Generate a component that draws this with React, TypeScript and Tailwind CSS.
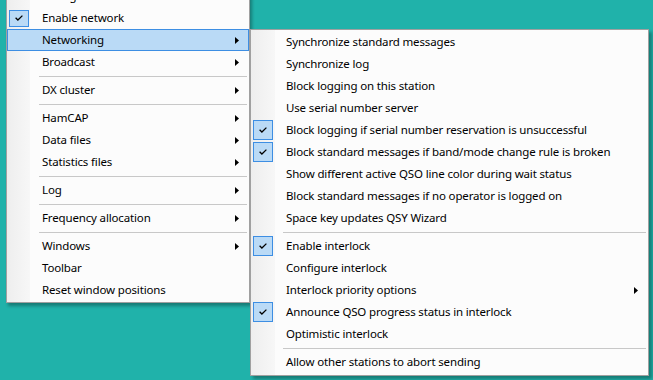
import React from "react";

type Item =
  | { sep: true }
  | { label: string; checked?: boolean; arrow?: boolean; active?: boolean };

const mainMenu: Item[] = [
  { label: "Configuration" },
  { label: "Enable network", checked: true },
  { label: "Networking", arrow: true, active: true },
  { label: "Broadcast", arrow: true },
  { sep: true },
  { label: "DX cluster", arrow: true },
  { sep: true },
  { label: "HamCAP", arrow: true },
  { label: "Data files", arrow: true },
  { label: "Statistics files", arrow: true },
  { sep: true },
  { label: "Log", arrow: true },
  { sep: true },
  { label: "Frequency allocation", arrow: true },
  { sep: true },
  { label: "Windows", arrow: true },
  { label: "Toolbar" },
  { label: "Reset window positions" },
];

const subMenu: Item[] = [
  { label: "Synchronize standard messages" },
  { label: "Synchronize log" },
  { label: "Block logging on this station" },
  { label: "Use serial number server" },
  { label: "Block logging if serial number reservation is unsuccessful", checked: true },
  { label: "Block standard messages if band/mode change rule is broken", checked: true },
  { label: "Show different active QSO line color during wait status" },
  { label: "Block standard messages if no operator is logged on" },
  { label: "Space key updates QSY Wizard" },
  { sep: true },
  { label: "Enable interlock", checked: true },
  { label: "Configure interlock" },
  { label: "Interlock priority options", arrow: true },
  { label: "Announce QSO progress status in interlock", checked: true },
  { label: "Optimistic interlock" },
  { sep: true },
  { label: "Allow other stations to abort sending" },
];

const CheckBox = ({ tall }: { tall: boolean }) => (
  <span
    className={`flex w-[20px] items-center justify-center border border-[#3d8ee3] bg-[#badaf6] ${
      tall ? "h-[20px]" : "h-[17px]"
    }`}
  >
    <svg width="8" height="6" viewBox="0 0 8 6">
      <path d="M0.6 2.8 L2.9 5 L7.4 0.6" fill="none" stroke="#000" strokeWidth="1.3" />
    </svg>
  </span>
);

const Arrow = () => (
  <svg width="4" height="7" viewBox="0 0 4 7">
    <polygon points="0,0 4,3.5 0,7" fill="#000" />
  </svg>
);

function MenuRows({ items, tallChecks }: { items: Item[]; tallChecks: boolean }) {
  return (
    <>
      {items.map((it, i) =>
        "sep" in it ? (
          <div key={i} className="h-[6px] pl-[32px] pr-[2px] pt-[3px]">
            <div className="h-px bg-[#c8c8c8]" />
          </div>
        ) : (
          <div
            key={i}
            className={`flex h-[22px] items-center whitespace-nowrap ${
              it.active ? "bg-[#badaf6] shadow-[inset_0_0_0_1px_#3d8ee3]" : ""
            }`}
          >
            <span className="ml-[2px] flex w-[20px] justify-center">
              {it.checked && <CheckBox tall={tallChecks} />}
            </span>
            <span className="ml-[13px] flex-1 text-black">{it.label}</span>
            {it.arrow && (
              <span className="mr-[10px] flex">
                <Arrow />
              </span>
            )}
          </div>
        )
      )}
    </>
  );
}

export default function App() {
  return (
    <div className="relative h-[380px] w-[653px] overflow-hidden bg-[#20b2aa] font-['Noto_Sans',sans-serif] text-[11.5px] leading-[22px] tracking-[-0.15px]">
      <div className="absolute left-[6px] top-[-18px] w-[244px] border border-[#a0a0a0] bg-[linear-gradient(to_right,#eeeeee_0px,#f7f7f7_23px,#fcfcfc_23px)] pb-[1px] pt-[2px] shadow-[2px_3px_3px_rgba(0,0,0,0.3)]">
        <MenuRows items={mainMenu} tallChecks={false} />
      </div>
      <div className="absolute left-[250px] top-[29px] w-[399px] border border-[#a0a0a0] bg-[linear-gradient(to_right,#eeeeee_0px,#f7f7f7_24px,#fcfcfc_24px)] pb-[2px] pt-[1px] shadow-[3px_3px_3px_rgba(0,0,0,0.3)]">
        <MenuRows items={subMenu} tallChecks={true} />
      </div>
    </div>
  );
}
